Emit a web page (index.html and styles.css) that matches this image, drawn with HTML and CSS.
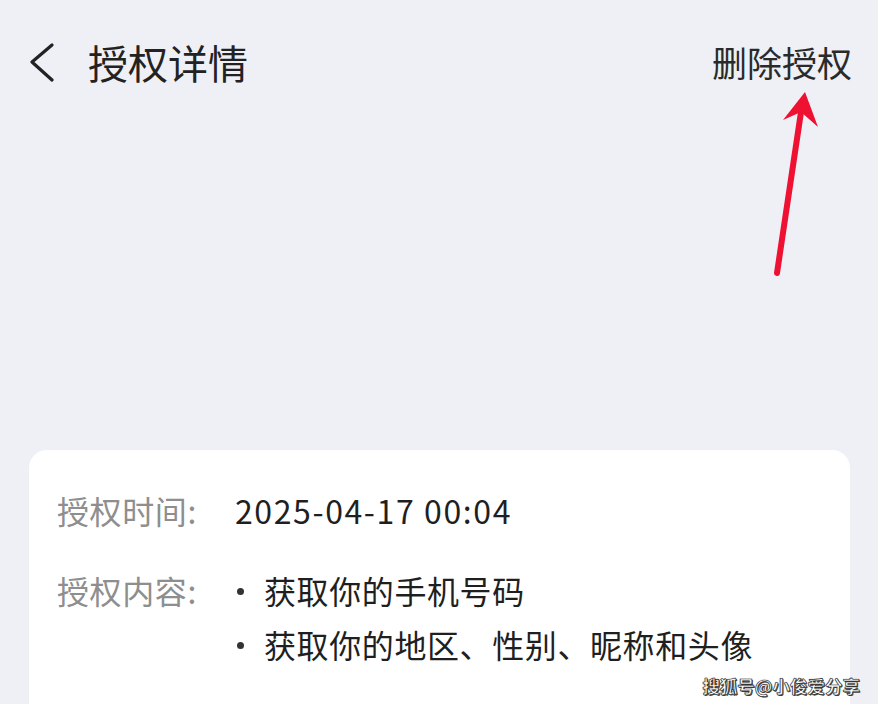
FILE: index.html
```html
<!DOCTYPE html>
<html lang="zh-CN">
<head>
    <meta charset="UTF-8">
    <meta name="viewport" content="width=device-width, initial-scale=1.0">
    <title>授权详情</title>
    <link rel="stylesheet" href="styles.css">
</head>
<body>

    <div class="page">
        <header class="top-bar">
            <div class="title-group">
                <svg class="back-icon" width="28" height="40" viewBox="0 0 28 40">
                    <polyline points="23,2 3,19 23,37" fill="none" stroke="#222" stroke-width="3.2" stroke-linecap="round" stroke-linejoin="round"/>
                </svg>
                <h1>授权详情</h1>
            </div>
            <a class="delete-link" href="#">删除授权</a>
        </header>

        <section class="detail-card">
            <div class="detail-row">
                <span class="label">授权时间:</span>
                <span class="value date">2025-04-17 00:04</span>
            </div>
            <div class="detail-row">
                <span class="label">授权内容:</span>
                <ul class="value scope-list">
                    <li>获取你的手机号码</li>
                    <li>获取你的地区、性别、昵称和头像</li>
                </ul>
            </div>
        </section>

        <!-- annotation arrow drawn over the screenshot -->
        <svg class="mark-arrow" width="878" height="704" viewBox="0 0 878 704">
            <line x1="777" y1="273" x2="801" y2="112" stroke="#ee1131" stroke-width="6" stroke-linecap="round"/>
            <polygon points="805,92 818,127 801,112 783,120" fill="#ee1131"/>
        </svg>

        <div class="watermark">搜狐号@小俊爱分享</div>
    </div>

</body>
</html>
```

FILE: styles.css
```css
/* Reset */
* {
    box-sizing: border-box;
    margin: 0;
    padding: 0;
}

html, body {
    height: 100%;
    overflow: hidden;
}

body {
    font-family: "Noto Sans CJK SC", "Noto Sans", sans-serif;
    background-color: #eef0f5;
    color: #222;
}

.page {
    position: relative;
    height: 704px;
    overflow: hidden;
}

/* Header */
.top-bar {
    display: flex;
    justify-content: space-between;
    align-items: center;
    height: 56px;
    margin-top: 34px;
    padding: 0 26px 0 29px;
}

.title-group {
    display: flex;
    align-items: center;
}

.back-icon {
    margin-right: 31px;
    margin-top: 2px;
}

.top-bar h1 {
    font-size: 40px;
    font-weight: 400;
    line-height: 56px;
    color: #222;
}

.delete-link {
    font-size: 35px;
    line-height: 56px;
    color: #2a2a2a;
    text-decoration: none;
}

/* Card */
.detail-card {
    margin: 360px 28px 0 29px;
    height: 400px;
    padding: 33px 28px 0 28px;
    background-color: #fff;
    border-radius: 18px;
}

.detail-row {
    display: flex;
    font-size: 32px;
    line-height: 54px;
    letter-spacing: 0.6px;
    margin-bottom: 26px;
}

.label {
    width: 178px;
    flex-shrink: 0;
    color: #8e8e8e;
}

.value {
    color: #1f1f1f;
}

.date {
    letter-spacing: 1.6px;
}

.scope-list {
    list-style: none;
}

.scope-list li {
    position: relative;
    padding-left: 29px;
}

.scope-list li::before {
    content: "";
    position: absolute;
    left: 2px;
    top: 25px;
    width: 7px;
    height: 7px;
    border-radius: 50%;
    background-color: #333;
}

/* Overlays */
.mark-arrow {
    position: absolute;
    left: 0;
    top: 0;
    pointer-events: none;
}

.watermark {
    position: absolute;
    right: 18px;
    bottom: 6px;
    font-size: 17.5px;
    font-weight: 700;
    line-height: 24px;
    color: #fff;
    -webkit-text-stroke: 0.6px #333;
    text-shadow: 0 0 1px #000, 1px 1px 0 #444;
}
```
